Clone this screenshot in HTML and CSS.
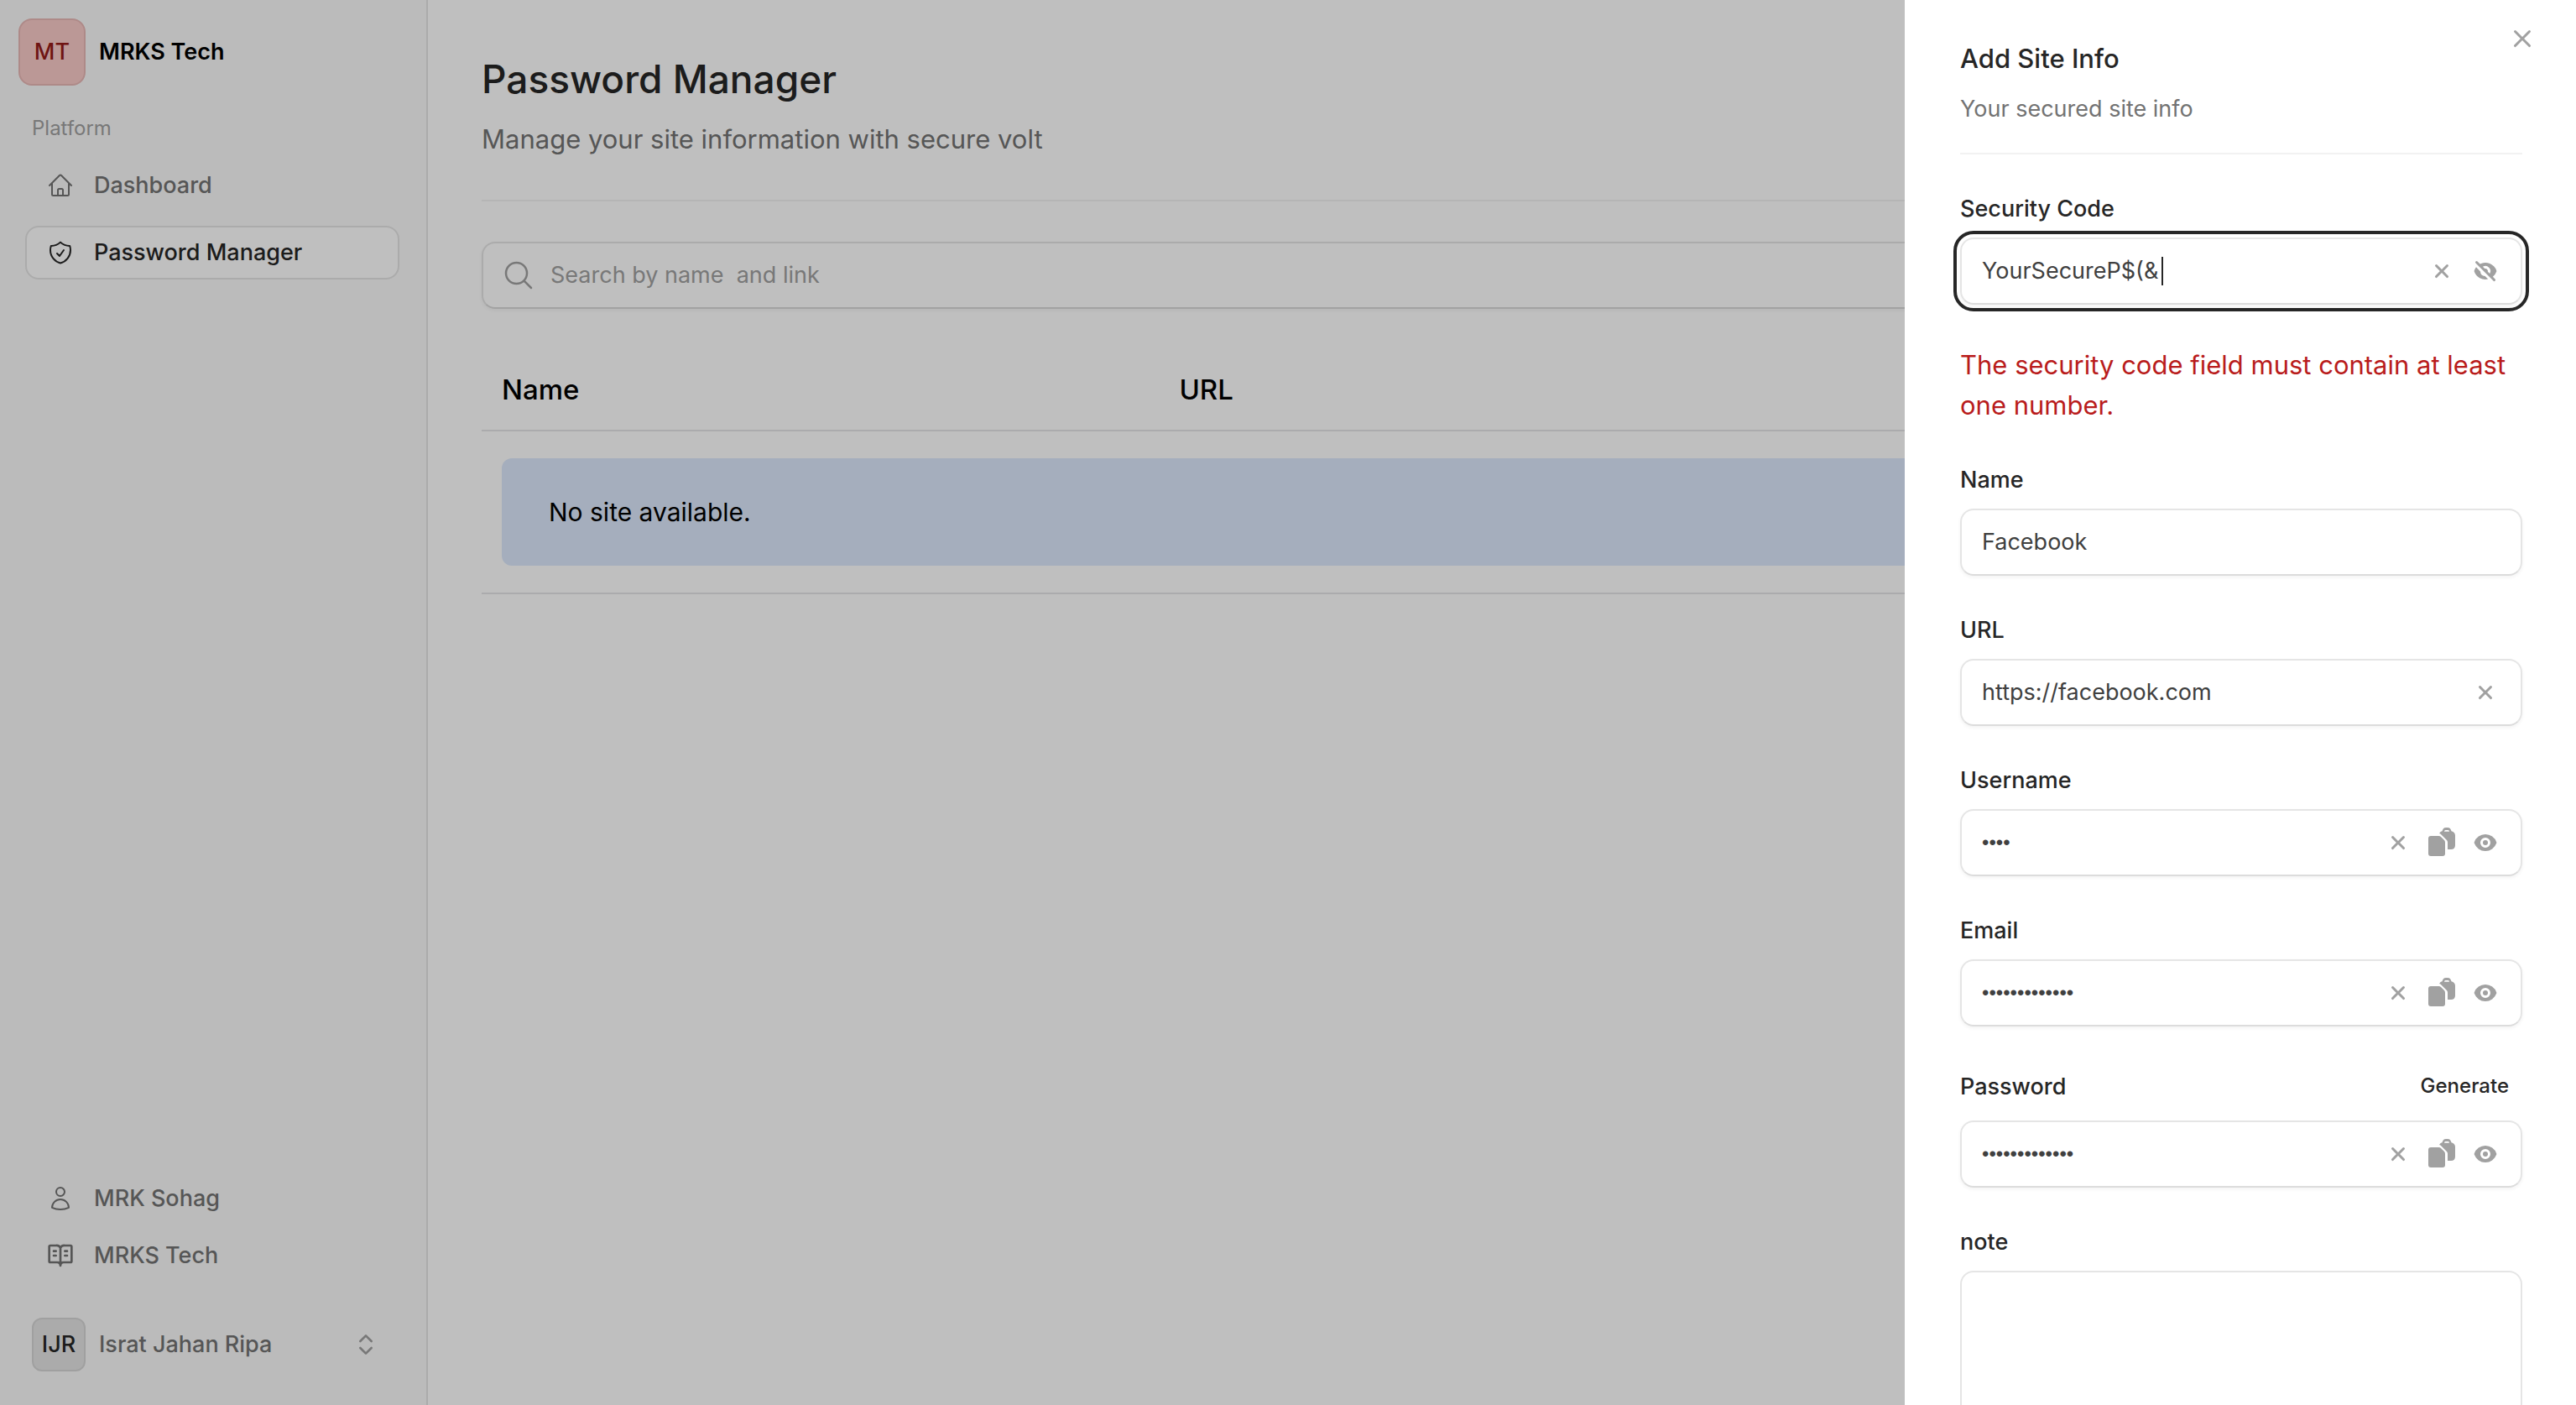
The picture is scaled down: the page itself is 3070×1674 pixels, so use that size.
FILE: index.html
```html
<!DOCTYPE html>
<html lang="en">
<head>
<meta charset="utf-8">
<meta name="viewport" content="width=device-width, initial-scale=1">
<title>Password Manager - MRKS Tech</title>
<link rel="stylesheet" href="styles.css">
</head>
<body>
<svg class="sprite" aria-hidden="true">
  <symbol id="i-x" viewBox="0 0 16 16"><path fill="currentColor" d="M5.28 4.22a.75.75 0 0 0-1.06 1.06L6.94 8l-2.72 2.72a.75.75 0 1 0 1.06 1.06L8 9.06l2.72 2.72a.75.75 0 1 0 1.06-1.06L9.06 8l2.72-2.72a.75.75 0 0 0-1.06-1.06L8 6.94 5.28 4.22Z"/></symbol>
  <symbol id="i-eye" viewBox="0 0 16 16"><path fill="currentColor" d="M8 9.5a1.5 1.5 0 1 0 0-3 1.5 1.5 0 0 0 0 3Z"/><path fill="currentColor" fill-rule="evenodd" d="M1.38 8.28a.87.87 0 0 1 0-.566 7.003 7.003 0 0 1 13.238.006.87.87 0 0 1 0 .566A7.003 7.003 0 0 1 1.379 8.28ZM11 8a3 3 0 1 1-6 0 3 3 0 0 1 6 0Z"/></symbol>
  <symbol id="i-eye-slash" viewBox="0 0 16 16"><path fill="currentColor" fill-rule="evenodd" d="M3.28 2.22a.75.75 0 0 0-1.06 1.06l10.5 10.5a.75.75 0 1 0 1.06-1.06l-1.322-1.323a7.012 7.012 0 0 0 2.16-3.11.87.87 0 0 0 0-.567A7.003 7.003 0 0 0 4.82 3.76l-1.54-1.54Zm3.196 3.195 1.135 1.136A1.502 1.502 0 0 1 9.45 8.389l1.136 1.135a3 3 0 0 0-4.109-4.109Z"/><path fill="currentColor" d="m7.8 10.993 1.816 1.815A7.003 7.003 0 0 1 1.38 8.28a.87.87 0 0 1 0-.566 6.985 6.985 0 0 1 1.113-2.039l2.513 2.513a3 3 0 0 0 2.794 2.794Z"/></symbol>
  <symbol id="i-copy" viewBox="0 1 40 40"><path fill="currentColor" d="M7 13h9.500q1.500 0 2.500 1l4 4q1 1 1 2.500v13.500a3 3 0 0 1-3 3H7a3 3 0 0 1-3-3V16a3 3 0 0 1 3-3Z"/><path fill="currentColor" fill-rule="evenodd" d="M17 10q1.500-2.500 3.500-2.700Q21.500 3 25 3h2q3.500 0 4.500 4.300Q36 8.500 36 12.500V24q0 5-5 5h-4V20.500q0-1.500-1-2.500l-7-7q-1-1-2-1ZM23 7.800h6q0-1.800-1.500-1.800h-3Q23 6 23 7.800Z"/></symbol>
  <symbol id="i-close" viewBox="0 0 20 20"><path fill="currentColor" d="M6.280 5.220a.75.75 0 0 0-1.060 1.060L8.940 10l-3.720 3.720a.75.75 0 1 0 1.060 1.060L10 11.060l3.720 3.720a.75.75 0 1 0 1.060-1.060L11.060 10l3.720-3.720a.75.75 0 0 0-1.060-1.060L10 8.940 6.280 5.220Z"/></symbol>
</svg>

<div class="app">
  <aside class="sidebar">
    <a class="brand" href="#"><span class="brand-mark">MT</span><span>MRKS Tech</span></a>
    <nav class="nav" aria-label="Platform">
      <h2 class="nav-title">Platform</h2>
      <a class="nav-item" href="#"><svg class="icon outline" viewBox="0 0 24 24"><path d="m2.250 12 8.954-8.955c.44-.439 1.152-.439 1.591 0L21.750 12M4.500 9.750v10.125c0 .621.504 1.125 1.125 1.125H9.750v-4.875c0-.621.504-1.125 1.125-1.125h2.250c.621 0 1.125.504 1.125 1.125V21h4.125c.621 0 1.125-.504 1.125-1.125V9.750M8.250 21h8.250"/></svg>Dashboard</a>
      <a class="nav-item current" href="#" aria-current="page"><svg class="icon outline" viewBox="0 0 24 24"><path d="M9 12.750 11.250 15 15 9.750m-3-7.036A11.959 11.959 0 0 1 3.598 6 11.990 11.990 0 0 0 3 9.749c0 5.592 3.824 10.290 9 11.623 5.176-1.332 9-6.030 9-11.622 0-1.310-.210-2.571-.598-3.751h-.152c-3.196 0-6.100-1.248-8.250-3.285Z"/></svg>Password Manager</a>
    </nav>
    <nav class="nav nav-bottom" aria-label="Links">
      <a class="nav-item" href="#"><svg class="icon outline" viewBox="0 0 24 24"><path d="M15.750 6a3.750 3.750 0 1 1-7.500 0 3.750 3.750 0 0 1 7.500 0ZM4.501 20.118a7.500 7.500 0 0 1 14.998 0A17.933 17.933 0 0 1 12 21.750c-2.676 0-5.216-.584-7.499-1.632Z"/></svg>MRK Sohag</a>
      <a class="nav-item" href="#"><svg class="icon outline bold" viewBox="0 0 24 24"><path d="M12 5v16M16 12h2M16 8h2M6 12h2M6 8h2M3 18a1 1 0 0 1-1-1V4a1 1 0 0 1 1-1h5a4 4 0 0 1 4 2 4 4 0 0 1 4-2h5a1 1 0 0 1 1 1v13a1 1 0 0 1-1 1h-6q-3 0-3 3 0-3-3-3z"/></svg>MRKS Tech</a>
    </nav>
    <button class="profile" type="button"><span class="avatar">IJR</span><span class="profile-name">Israt Jahan Ripa</span><svg class="icon outline bold faint" viewBox="0 0 24 24"><path d="m7 15 5 5 5-5M7 9l5-5 5 5"/></svg></button>
  </aside>

  <main class="main">
    <h1 class="title">Password Manager</h1>
    <p class="subtitle">Manage your site information with secure volt</p>
    <hr class="rule">
    <label class="search">
      <svg class="icon-lg outline" viewBox="0 0 24 24" aria-hidden="true"><path d="m21 21-5.197-5.197m0 0A7.500 7.500 0 1 0 5.196 5.196a7.500 7.500 0 0 0 10.607 10.607Z"/></svg>
      <input type="search" aria-label="Search" placeholder="Search by name  and link">
    </label>
    <table class="sites">
      <thead><tr><th class="col-name" scope="col">Name</th><th scope="col">URL</th></tr></thead>
      <tbody><tr><td colspan="2"><div class="notice">No site available.</div></td></tr></tbody>
    </table>
  </main>
</div>

<div class="overlay"></div>

<section class="panel" role="dialog" aria-labelledby="panel-title">
  <button class="close" type="button" aria-label="Close"><svg class="icon-lg"><use href="#i-close"/></svg></button>
  <h2 class="panel-title" id="panel-title">Add Site Info</h2>
  <p class="panel-sub">Your secured site info</p>
  <hr class="rule panel-rule">
  <form class="form">
    <div class="field">
      <label for="code">Security Code</label>
      <div class="control active">
        <input id="code" type="text" value="YourSecureP$(&amp;">
        <span class="caret"></span>
        <button type="button" aria-label="Clear"><svg class="icon"><use href="#i-x"/></svg></button>
        <button type="button" aria-label="Hide"><svg class="icon"><use href="#i-eye-slash"/></svg></button>
      </div>
      <p class="error" role="alert">The security code field must contain at least one number.</p>
    </div>
    <div class="field">
      <label for="name">Name</label>
      <div class="control"><input id="name" type="text" value="Facebook"></div>
    </div>
    <div class="field">
      <label for="url">URL</label>
      <div class="control">
        <input id="url" type="url" value="https://facebook.com">
        <button type="button" aria-label="Clear"><svg class="icon"><use href="#i-x"/></svg></button>
      </div>
    </div>
    <div class="field">
      <label for="username">Username</label>
      <div class="control">
        <input id="username" type="password" value="ripa">
        <button type="button" aria-label="Clear"><svg class="icon"><use href="#i-x"/></svg></button>
        <button type="button" aria-label="Copy"><svg class="icon-lg"><use href="#i-copy"/></svg></button>
        <button type="button" aria-label="Show"><svg class="icon"><use href="#i-eye"/></svg></button>
      </div>
    </div>
    <div class="field">
      <label for="email">Email</label>
      <div class="control">
        <input id="email" type="password" value="ripa@mail.com">
        <button type="button" aria-label="Clear"><svg class="icon"><use href="#i-x"/></svg></button>
        <button type="button" aria-label="Copy"><svg class="icon-lg"><use href="#i-copy"/></svg></button>
        <button type="button" aria-label="Show"><svg class="icon"><use href="#i-eye"/></svg></button>
      </div>
    </div>
    <div class="field">
      <div class="field-head">
        <label for="password">Password</label>
        <button class="generate" type="button">Generate</button>
      </div>
      <div class="control">
        <input id="password" type="password" value="secret-phrase">
        <button type="button" aria-label="Clear"><svg class="icon"><use href="#i-x"/></svg></button>
        <button type="button" aria-label="Copy"><svg class="icon-lg"><use href="#i-copy"/></svg></button>
        <button type="button" aria-label="Show"><svg class="icon"><use href="#i-eye"/></svg></button>
      </div>
    </div>
    <div class="field">
      <label for="note">note</label>
      <textarea id="note" class="note" rows="6"></textarea>
    </div>
  </form>
</section>
</body>
</html>
```
FILE: styles.css
```css
* { box-sizing: border-box; }

:root {
  --ink: #262626;
  --muted: #737373;
  --faint: #a1a1a1;
  --line: #e5e5e5;
}

body {
  margin: 0;
  background: #fff;
  color: #000;
  font: 400 27px/40px Inter, "Liberation Sans", sans-serif;
}

h1, h2, p { margin: 0; font-weight: 500; }
a { color: inherit; text-decoration: none; }
button { padding: 0; border: 0; background: none; color: inherit; font: inherit; cursor: pointer; }
input, textarea { font: inherit; color: #404040; border: 0; outline: 0; background: none; }

.sprite { display: none; }
.icon { width: 32px; height: 32px; flex: none; display: block; }
.icon-lg { width: 40px; height: 40px; flex: none; display: block; }
.outline { fill: none; stroke: currentColor; stroke-width: 1.5; stroke-linecap: round; stroke-linejoin: round; }
.bold { stroke-width: 2; }
.faint { color: var(--faint); }

.app { display: grid; grid-template-columns: 510px 1fr; min-height: 100vh; }

/* Sidebar */
.sidebar {
  display: flex;
  flex-direction: column;
  padding: 22px 32px 32px 30px;
  background: #fafafa;
  border-right: 2px solid var(--line);
}
.brand { display: flex; align-items: center; gap: 16px; margin-left: -8px; font-weight: 600; }
.brand-mark {
  display: grid;
  place-items: center;
  width: 80px;
  height: 80px;
  border: 2px solid #e9b8b6;
  border-radius: 16px;
  background: #facbc9;
  color: #941b18;
  font-weight: 500;
}
.nav { display: flex; flex-direction: column; gap: 16px; margin-top: 35px; }
.nav-title { padding: 0 8px 4px; color: var(--faint); font-size: 24px; line-height: 32px; font-weight: 400; }
.nav-item {
  display: flex;
  align-items: center;
  gap: 24px;
  height: 64px;
  padding: 0 24px;
  border: 2px solid transparent;
  border-radius: 16px;
  color: var(--muted);
  font-weight: 500;
}
.nav-item.current { background: #fff; border-color: var(--line); color: var(--ink); }
.nav-bottom { gap: 4px; margin-top: auto; }
.profile {
  display: flex;
  align-items: center;
  gap: 16px;
  margin-top: 34px;
  padding: 8px 24px 8px 8px;
  color: var(--muted);
  font-weight: 500;
}
.avatar {
  display: grid;
  place-items: center;
  width: 64px;
  height: 64px;
  border: 2px solid #d6d6d6;
  border-radius: 12px;
  background: #e5e5e5;
  color: var(--ink);
}
.profile-name { flex: 1; text-align: left; }

/* Main */
.main { padding: 64px; min-width: 0; }
.title { color: var(--ink); font-size: 46px; line-height: 60px; }
.subtitle { margin-top: 18px; color: var(--muted); font-size: 31px; line-height: 48px; font-weight: 400; }
.rule { height: 2px; margin: 48px 0; border: 0; background: #f2f2f2; }
.search {
  display: flex;
  align-items: center;
  gap: 18px;
  height: 80px;
  padding: 0 22px;
  border: 2px solid var(--line);
  border-bottom-color: #d9d9d9;
  border-radius: 16px;
  box-shadow: 0 2px 4px rgba(0, 0, 0, .05);
  color: var(--faint);
}
.search input { flex: 1; padding: 0; }
.search input::placeholder { color: var(--faint); opacity: 1; }

.sites { width: 100%; margin-top: 48px; border-spacing: 0; font-size: 30px; line-height: 48px; }
.sites th { padding: 24px; text-align: left; font-size: 33px; font-weight: 500; border-bottom: 2px solid #e4e4e7; }
.sites td { padding: 32px 24px; border-bottom: 2px solid #e4e4e7; }
.col-name { width: 33.2%; }
.notice { padding: 40px 56px; border-radius: 12px; background: #dde9fc; }

.overlay { position: fixed; inset: 0; background: rgba(0, 0, 0, .25); }

/* Slide-over panel */
.panel {
  position: fixed;
  inset: 0 0 0 auto;
  width: 800px;
  max-width: 100%;
  padding: 50px 64px 64px 66px;
  overflow: auto;
  scrollbar-width: none;
  background: #fff;
}
.close { position: absolute; top: 26px; right: 44px; color: var(--faint); }
.panel-title { color: var(--ink); font-size: 31px; line-height: 40px; }
.panel-sub { margin-top: 20px; color: var(--muted); font-weight: 400; }
.panel-rule { margin: 32px 0 45px; }
.form { display: flex; flex-direction: column; gap: 45px; }
.field { display: flex; flex-direction: column; gap: 14px; }
.field label { color: var(--ink); font-weight: 500; }
.field-head { display: flex; align-items: center; justify-content: space-between; }
.generate { padding: 14px 16px 15px; color: var(--ink); font-size: 24px; line-height: 24px; font-weight: 500; }
.control {
  position: relative;
  display: flex;
  align-items: center;
  gap: 12px;
  height: 80px;
  padding: 0 22px 0 24px;
  border: 2px solid var(--line);
  border-bottom-color: #dcdcdc;
  border-radius: 16px;
  box-shadow: 0 2px 4px rgba(0, 0, 0, .05);
}
.control.active { outline: 4px solid var(--ink); outline-offset: 4px; }
.control input { flex: 1; min-width: 0; padding: 0; }
.control input[type="password"] { font-family: "Liberation Sans", sans-serif; font-size: 24px; }
.control button { display: grid; place-items: center; width: 40px; height: 40px; color: var(--faint); }
.caret { position: absolute; left: 238px; top: 21px; width: 2px; height: 34px; background: var(--ink); }
.error { margin-top: 34px; color: #b91c1c; font-size: 31px; line-height: 48px; font-weight: 400; }
.note { padding: 20px 24px; border: 2px solid var(--line); border-radius: 16px; resize: vertical; }
```
